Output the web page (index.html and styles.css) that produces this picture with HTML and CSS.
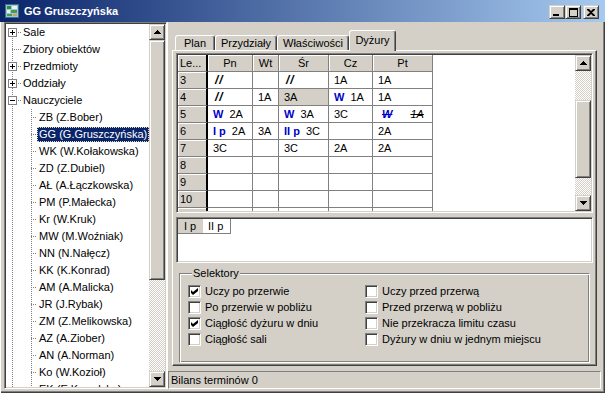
FILE: index.html
```html
<!DOCTYPE html>
<html lang="pl">
<head>
    <meta charset="UTF-8">
    <title>GG Gruszczyńska</title>
    <link rel="stylesheet" href="styles.css">
</head>
<body>
<div class="okno">
    <div class="belka">
        <svg class="ikona" width="16" height="16" viewBox="0 0 16 16">
            <rect x="1" y="1" width="14" height="14" fill="#3d6f8a"/>
            <rect x="2" y="2" width="12" height="12" fill="#9cc7d6"/>
            <rect x="3" y="3" width="4" height="3" fill="#2e8b3a"/>
            <rect x="8" y="3" width="5" height="3" fill="#e8f0f0"/>
            <rect x="3" y="7" width="3" height="3" fill="#e8f0f0"/>
            <rect x="7" y="7" width="6" height="3" fill="#4a9a4a"/>
            <rect x="3" y="11" width="5" height="2" fill="#4a9a4a"/>
            <rect x="9" y="11" width="4" height="2" fill="#c8a060"/>
        </svg>
        <span class="tytul">GG Gruszczyńska</span>
        <div class="przyciski">
            <span class="przycisk wypukly">
                <svg width="8" height="7" viewBox="0 0 8 7"><rect x="0" y="5" width="6" height="2"/></svg>
            </span>
            <span class="przycisk wypukly">
                <svg width="9" height="9" viewBox="0 0 9 9"><path fill-rule="evenodd" d="M0 0h9v9H0zM1 2v6h7V2z"/></svg>
            </span>
            <span class="przycisk wypukly zamknij">
                <svg width="8" height="7" viewBox="0 0 8 7"><path d="M0 0h2l2 2 2-2h2v1l-3 2.5 3 2.5v1h-2l-2-2-2 2H0v-1l3-2.5L0 1z"/></svg>
            </span>
        </div>
    </div>

    <div class="glowna">
        <div class="drzewo wklesly">
            <ul class="lista">
                <li class="wezel"><span class="wciecie gora"><svg class="plus" width="9" height="9" viewBox="0 0 9 9"><rect x="0.5" y="0.5" width="8" height="8" fill="#fff" stroke="#808080"/><path d="M2 4.5h5M4.5 2v5" stroke="#000"/></svg></span><span class="etykieta">Sale</span></li>
                <li class="wezel"><span class="wciecie"></span><span class="etykieta">Zbiory obiektów</span></li>
                <li class="wezel"><span class="wciecie"><svg class="plus" width="9" height="9" viewBox="0 0 9 9"><rect x="0.5" y="0.5" width="8" height="8" fill="#fff" stroke="#808080"/><path d="M2 4.5h5M4.5 2v5" stroke="#000"/></svg></span><span class="etykieta">Przedmioty</span></li>
                <li class="wezel"><span class="wciecie"><svg class="plus" width="9" height="9" viewBox="0 0 9 9"><rect x="0.5" y="0.5" width="8" height="8" fill="#fff" stroke="#808080"/><path d="M2 4.5h5M4.5 2v5" stroke="#000"/></svg></span><span class="etykieta">Oddziały</span></li>
                <li class="wezel"><span class="wciecie"><svg class="plus" width="9" height="9" viewBox="0 0 9 9"><rect x="0.5" y="0.5" width="8" height="8" fill="#fff" stroke="#808080"/><path d="M2 4.5h5" stroke="#000"/></svg></span><span class="etykieta">Nauczyciele</span></li>
                <li class="wezel"><span class="wciecie dziecko"></span><span class="etykieta">ZB (Z.Bober)</span></li>
                <li class="wezel"><span class="wciecie dziecko"></span><span class="etykieta zaznaczony">GG (G.Gruszczyńska)</span></li>
                <li class="wezel"><span class="wciecie dziecko"></span><span class="etykieta">WK (W.Kołakowska)</span></li>
                <li class="wezel"><span class="wciecie dziecko"></span><span class="etykieta">ZD (Z.Dubiel)</span></li>
                <li class="wezel"><span class="wciecie dziecko"></span><span class="etykieta">AŁ (A.Łączkowska)</span></li>
                <li class="wezel"><span class="wciecie dziecko"></span><span class="etykieta">PM (P.Małecka)</span></li>
                <li class="wezel"><span class="wciecie dziecko"></span><span class="etykieta">Kr (W.Kruk)</span></li>
                <li class="wezel"><span class="wciecie dziecko"></span><span class="etykieta">MW (M.Woźniak)</span></li>
                <li class="wezel"><span class="wciecie dziecko"></span><span class="etykieta">NN (N.Nałęcz)</span></li>
                <li class="wezel"><span class="wciecie dziecko"></span><span class="etykieta">KK (K.Konrad)</span></li>
                <li class="wezel"><span class="wciecie dziecko"></span><span class="etykieta">AM (A.Malicka)</span></li>
                <li class="wezel"><span class="wciecie dziecko"></span><span class="etykieta">JR (J.Rybak)</span></li>
                <li class="wezel"><span class="wciecie dziecko"></span><span class="etykieta">ZM (Z.Melikowska)</span></li>
                <li class="wezel"><span class="wciecie dziecko"></span><span class="etykieta">AZ (A.Ziober)</span></li>
                <li class="wezel"><span class="wciecie dziecko"></span><span class="etykieta">AN (A.Norman)</span></li>
                <li class="wezel"><span class="wciecie dziecko"></span><span class="etykieta">Ko (W.Kozioł)</span></li>
                <li class="wezel"><span class="wciecie dziecko"></span><span class="etykieta">EK (E.Kowalska)</span></li>
            </ul>
            <div class="pasek">
                <span class="strzalka wypukly"><svg width="7" height="4" viewBox="0 0 7 4"><path d="M3 0h1v1H3zM2 1h3v1H2zM1 2h5v1H1zM0 3h7v1H0z"/></svg></span>
                <span class="suwak wypukly drzewo-suwak"></span>
                <span class="tor"></span>
                <span class="strzalka wypukly"><svg width="7" height="4" viewBox="0 0 7 4"><path d="M0 0h7v1H0zM1 1h5v1H1zM2 2h3v1H2zM3 3h1v1H3z"/></svg></span>
            </div>
        </div>

        <div class="prawa">
            <div class="zakladki">
                <span class="zakladka z-plan">Plan</span>
                <span class="zakladka z-przydzialy">Przydziały</span>
                <span class="zakladka z-wlasciwosci">Właściwości</span>
                <span class="zakladka z-dyzury aktywna">Dyżury</span>
            </div>

            <div class="strona">
                <div class="siatka wklesly">
                    <div class="obszar">
                        <table class="plan">
                            <thead>
                                <tr>
                                    <th class="le">Le...</th>
                                    <th class="k-pn">Pn</th>
                                    <th class="k-wt">Wt</th>
                                    <th class="k-sr">Śr</th>
                                    <th class="k-cz">Cz</th>
                                    <th class="k-pt">Pt</th>
                                </tr>
                            </thead>
                            <tbody>
                                <tr><th class="le">3</th><td><i class="kreski">//</i></td><td></td><td><i class="kreski">//</i></td><td>1A</td><td>1A</td></tr>
                                <tr><th class="le">4</th><td><i class="kreski">//</i></td><td>1A</td><td class="wybrana">3A</td><td><b class="znak">W</b>1A</td><td>1A</td></tr>
                                <tr><th class="le">5</th><td><b class="znak">W</b>2A</td><td></td><td><b class="znak">W</b>3A</td><td>3C</td><td><b class="znak skreslony">W</b><i class="skreslony">1A</i></td></tr>
                                <tr><th class="le">6</th><td><b class="znak">I p</b>2A</td><td>3A</td><td><b class="znak">II p</b>3C</td><td></td><td>2A</td></tr>
                                <tr><th class="le">7</th><td>3C</td><td></td><td>3C</td><td>2A</td><td>2A</td></tr>
                                <tr><th class="le">8</th><td></td><td></td><td></td><td></td><td></td></tr>
                                <tr><th class="le">9</th><td></td><td></td><td></td><td></td><td></td></tr>
                                <tr><th class="le">10</th><td></td><td></td><td></td><td></td><td></td></tr>
                                <tr><th class="le">11</th><td></td><td></td><td></td><td></td><td></td></tr>
                            </tbody>
                        </table>
                    </div>
                    <div class="pasek">
                        <span class="strzalka wypukly"><svg width="7" height="4" viewBox="0 0 7 4"><path d="M3 0h1v1H3zM2 1h3v1H2zM1 2h5v1H1zM0 3h7v1H0z"/></svg></span>
                        <span class="tor tor-gora"></span>
                        <span class="suwak wypukly siatka-suwak"></span>
                        <span class="tor"></span>
                        <span class="strzalka wypukly"><svg width="7" height="4" viewBox="0 0 7 4"><path d="M0 0h7v1H0zM1 1h5v1H1zM2 2h3v1H2zM3 3h1v1H3z"/></svg></span>
                    </div>
                </div>

                <div class="przerwy wklesly">
                    <div class="karty">
                        <span class="karta karta-aktywna">I p</span>
                        <span class="karta">II p</span>
                    </div>
                </div>

                <fieldset class="selektory">
                    <legend>Selektory</legend>
                    <div class="opcje">
                        <label class="opcja"><span class="pole"><svg width="7" height="7" viewBox="0 0 7 7"><path d="M0 2l2 2 5-4v3L2 7 0 5z"/></svg></span>Uczy po przerwie</label>
                        <label class="opcja"><span class="pole"></span>Uczy przed przerwą</label>
                        <label class="opcja"><span class="pole"></span>Po przerwie w pobliżu</label>
                        <label class="opcja"><span class="pole"></span>Przed przerwą w pobliżu</label>
                        <label class="opcja"><span class="pole"><svg width="7" height="7" viewBox="0 0 7 7"><path d="M0 2l2 2 5-4v3L2 7 0 5z"/></svg></span>Ciągłość dyżuru w dniu</label>
                        <label class="opcja"><span class="pole"></span>Nie przekracza limitu czasu</label>
                        <label class="opcja"><span class="pole"></span>Ciągłość sali</label>
                        <label class="opcja"><span class="pole"></span>Dyżury w dniu w jednym miejscu</label>
                    </div>
                </fieldset>
            </div>

            <div class="status">Bilans terminów 0</div>
        </div>
    </div>
</div>
</body>
</html>
```

FILE: styles.css
```css
* {
    box-sizing: border-box;
}
body {
    margin: 0;
    font-family: "Liberation Sans", Arial, sans-serif;
    font-size: 11px;
    color: #000;
    background-color: #d4d0c8;
}
.okno {
    width: 605px;
    height: 393px;
    display: flex;
    flex-direction: column;
    background-color: #d4d0c8;
    overflow: hidden;
}

/* belka tytulowa */
.belka {
    height: 22px;
    flex-shrink: 0;
    display: flex;
    align-items: center;
    padding: 0 6px 0 4px;
    background: linear-gradient(90deg, #0a246a, #a6caf0);
    color: #fff;
}
.ikona {
    margin-right: 4px;
}
.tytul {
    flex: 1;
    font-weight: bold;
    font-size: 11px;
}
.przyciski {
    display: flex;
    margin-top: 2px;
}
.przycisk {
    width: 16px;
    height: 14px;
    display: flex;
    align-items: center;
    justify-content: center;
}
.zamknij {
    margin-left: 2px;
}

.wypukly {
    border: 1px solid;
    border-color: #d4d0c8 #404040 #404040 #d4d0c8;
    box-shadow: inset 1px 1px #fff, inset -1px -1px #808080;
    background-color: #d4d0c8;
}
.wklesly {
    border: 1px solid;
    border-color: #808080 #fff #fff #808080;
    box-shadow: inset 1px 1px #404040, inset -1px -1px #d4d0c8;
    padding: 1px;
}

.glowna {
    flex: 1;
    min-height: 0;
    display: flex;
    padding: 0 4px 4px 4px;
    box-shadow: inset 1px 0 #fff, inset -1px -1px #404040, inset -2px -2px #808080;
}

/* drzewo */
.drzewo {
    width: 163px;
    min-height: 0;
    overflow: hidden;
    display: flex;
    background-color: #fff;
}
.lista {
    flex: 1;
    margin: 0;
    padding: 0;
    list-style: none;
    overflow: hidden;
    background:
        repeating-linear-gradient(#808080 0 1px, transparent 1px 2px) 6px 8px / 1px 100% no-repeat,
        repeating-linear-gradient(#808080 0 1px, transparent 1px 2px) 25px 85px / 1px 100% no-repeat,
        #fff;
}
.wezel {
    height: 17px;
    display: flex;
    align-items: center;
    white-space: nowrap;
}
.wciecie {
    width: 15px;
    height: 17px;
    flex-shrink: 0;
    display: flex;
    align-items: center;
    background: repeating-linear-gradient(90deg, #808080 0 1px, transparent 1px 2px) 6px 8px / 9px 1px no-repeat;
}
.wciecie.dziecko {
    width: 31px;
    background: repeating-linear-gradient(90deg, #808080 0 1px, transparent 1px 2px) 25px 8px / 6px 1px no-repeat;
}
.plus {
    margin-left: 2px;
}
.etykieta {
    padding: 0 2px;
    line-height: 15px;
}
.zaznaczony {
    background-color: #0a246a;
    color: #fff;
    outline: 1px dotted #e0e0b0;
    outline-offset: -1px;
}

/* paski przewijania */
.pasek {
    width: 16px;
    flex-shrink: 0;
    display: flex;
    flex-direction: column;
}
.strzalka {
    height: 16px;
    flex-shrink: 0;
    display: flex;
    align-items: center;
    justify-content: center;
}
.suwak {
    flex-shrink: 0;
}
.drzewo-suwak {
    height: 240px;
}
.siatka-suwak {
    height: 78px;
}
.tor {
    flex: 1;
    min-height: 0;
    background: repeating-conic-gradient(#fff 0 25%, #d4d0c8 0 50%) 0 0 / 2px 2px;
}
.tor-gora {
    flex: none;
    height: 29px;
}

/* prawa czesc */
.prawa {
    width: 434px;
    min-height: 0;
    display: flex;
    flex-direction: column;
    border-left: 1px solid #fff;
}
.zakladki {
    height: 20px;
    flex-shrink: 0;
    margin: 8px 4px 0 7px;
    display: flex;
    align-items: flex-end;
}
.zakladka {
    height: 15px;
    display: flex;
    align-items: center;
    justify-content: center;
    border: 1px solid;
    border-bottom: none;
    border-color: #fff #404040 transparent #fff;
    border-radius: 3px 3px 0 0;
    box-shadow: inset -1px 0 #808080;
    background-color: #d4d0c8;
}
.z-plan { width: 40px; }
.z-przydzialy { width: 62px; }
.z-wlasciwosci { width: 72px; }
.z-dyzury { width: 47px; }
.aktywna {
    height: 21px;
    margin-bottom: -1px;
    padding-bottom: 2px;
    position: relative;
    z-index: 1;
}
.strona {
    flex: 1;
    min-height: 0;
    margin: 0 4px;
    display: flex;
    flex-direction: column;
    padding: 2px 3px 2px 3px;
    border: 1px solid;
    border-color: #fff #404040 #404040 #fff;
    box-shadow: inset -1px -1px #808080;
}

/* siatka dyzurow */
.siatka {
    height: 160px;
    flex-shrink: 0;
    display: flex;
}
.obszar {
    flex: 1;
    overflow: hidden;
    background-color: #fff;
}
.plan {
    border-collapse: separate;
    border-spacing: 0;
    table-layout: fixed;
    width: 255px;
}
.plan th, .plan td {
    height: 17px;
    padding: 0 0 0 5px;
    border-right: 1px solid #808080;
    border-bottom: 1px solid #808080;
    font-weight: normal;
    text-align: left;
    white-space: nowrap;
    overflow: hidden;
    line-height: 16px;
}
.plan thead th {
    background-color: #d4d0c8;
    box-shadow: inset 1px 1px #fff;
    text-align: center;
    padding: 0;
}
.plan th.le {
    width: 30px;
    padding-left: 2px;
    text-align: left;
    background-color: #d4d0c8;
    box-shadow: inset 1px 1px #fff;
    border-right: 2px solid #000;
}
.k-pn { width: 45px; }
.k-wt { width: 26px; }
.k-sr { width: 50px; }
.k-cz { width: 44px; }
.k-pt { width: 60px; }
.wybrana {
    background-color: #d4d0c8;
}
.kreski {
    font-weight: bold;
    font-size: 12px;
    letter-spacing: 1px;
    margin-left: 2px;
}
.znak {
    color: #0000c8;
    margin-right: 6px;
}
.skreslony {
    text-decoration: line-through;
    font-style: italic;
}
b.skreslony {
    margin-left: 4px;
    margin-right: 18px;
}

/* przerwy */
.przerwy {
    height: 46px;
    flex-shrink: 0;
    margin-top: 4px;
    background-color: #fff;
}
.karty {
    display: flex;
}
.karta {
    height: 15px;
    line-height: 14px;
    padding-left: 5px;
    width: 28px;
    border-right: 1px solid #808080;
    border-bottom: 1px solid #808080;
    background-color: #fff;
}
.karta-aktywna {
    width: 25px;
    padding-left: 6px;
    border-right: none;
    background-color: #d4d0c8;
}

/* selektory */
.selektory {
    flex: 1;
    min-width: 0;
    min-height: 0;
    margin: 3px 3px 0 3px;
    padding: 3px 0 0 8px;
    border: 1px solid;
    border-color: #808080 #fff #fff #808080;
    box-shadow: inset 1px 1px #fff, inset -1px -1px #808080;
}
.selektory legend {
    margin-left: 4px;
    padding: 0 1px;
    line-height: 14px;
    background-color: #d4d0c8;
}
.opcje {
    display: grid;
    grid-template-columns: 177px auto;
    grid-auto-rows: 16px;
}
.opcja {
    display: flex;
    align-items: center;
    gap: 4px;
    white-space: nowrap;
}
.pole {
    width: 13px;
    height: 13px;
    flex-shrink: 0;
    display: flex;
    align-items: center;
    justify-content: center;
    border: 1px solid;
    border-color: #808080 #fff #fff #808080;
    box-shadow: inset 1px 1px #404040, inset -1px -1px #d4d0c8;
    background-color: #fff;
}

/* pasek stanu */
.status {
    height: 18px;
    flex-shrink: 0;
    margin-top: 5px;
    padding-left: 2px;
    line-height: 16px;
    border: 1px solid;
    border-color: #808080 #fff #fff #808080;
}
```
